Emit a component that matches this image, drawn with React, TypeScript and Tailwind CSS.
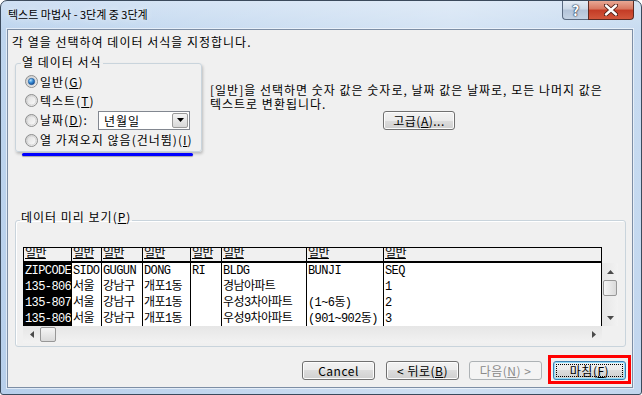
import React from 'react';

const colW = ['w-[48px]', 'w-[30px]', 'w-[41px]', 'w-[48px]', 'w-[31px]', 'w-[85px]', 'w-[77px]', 'w-[218px]'];

const rows = [
  ['ZIPCODE', 'SIDO', 'GUGUN', 'DONG', 'RI', 'BLDG', 'BUNJI', 'SEQ'],
  ['135-806', '서울', '강남구', '개포1동', '', '경남아파트', '', '1'],
  ['135-807', '서울', '강남구', '개포1동', '', '우성3차아파트', '(1~6동)', '2'],
  ['135-806', '서울', '강남구', '개포1동', '', '우성9차아파트', '(901~902동)', '3'],
];

const Radio = ({ on }: { on?: boolean }) => (
  <svg width="13" height="13" viewBox="0 0 13 13" className="shrink-0">
    <defs>
      <linearGradient id="rOuter" x1="0" y1="0" x2="1" y2="1">
        <stop offset="0" stopColor="#c9c9c9" />
        <stop offset="1" stopColor="#f6f6f6" />
      </linearGradient>
      <linearGradient id="rInner" x1="0" y1="0" x2="1" y2="1">
        <stop offset="0" stopColor="#dedede" />
        <stop offset="1" stopColor="#fbfbfb" />
      </linearGradient>
      <radialGradient id="rDot" cx="0.35" cy="0.3" r="0.8">
        <stop offset="0" stopColor="#b5e3fd" />
        <stop offset="0.45" stopColor="#3a8fd8" />
        <stop offset="1" stopColor="#0d3f86" />
      </radialGradient>
    </defs>
    <circle cx="6.5" cy="6.5" r="6" fill="url(#rOuter)" stroke="#8e8f8f" />
    <circle cx="6.5" cy="6.5" r="4.4" fill="url(#rInner)" stroke="#d0d0d0" strokeWidth="0.7" />
    {on && <circle cx="6.5" cy="6.5" r="3.2" fill="url(#rDot)" stroke="#1b4f8d" strokeWidth="0.6" />}
  </svg>
);

const Tri = ({ dir }: { dir: 'up' | 'down' | 'left' | 'right' }) => {
  const pts = {
    up: '0,4 3.5,0 7,4',
    down: '0,0 7,0 3.5,4',
    left: '4,0 4,7 0,3.5',
    right: '0,0 4,3.5 0,7',
  }[dir];
  const v = dir === 'up' || dir === 'down';
  return (
    <svg width={v ? 7 : 4} height={v ? 4 : 7} viewBox={v ? '0 0 7 4' : '0 0 4 7'}>
      <polygon points={pts} fill="#4a4a4a" />
    </svg>
  );
};

const Btn = ({ children, disabled, main }: { children: React.ReactNode; disabled?: boolean; main?: boolean }) => (
  <div
    className={
      disabled
        ? 'flex h-[19px] w-[73px] items-center justify-center rounded-[3px] border border-[#adb2b5] bg-[#f4f4f4] leading-[17px] tracking-[0.5px] text-[#8a8a8a]'
        : main
        ? 'flex h-[19px] w-[73px] rounded-[3px] border border-[#3c7fb1] bg-[linear-gradient(to_bottom,#f2f2f2_0%,#ebebeb_50%,#dddddd_50%,#cfcfcf_100%)] p-[1px] tracking-[0.5px] shadow-[inset_0_0_0_1px_#8fdcfb]'
        : 'flex h-[19px] w-[73px] items-center justify-center rounded-[3px] border border-[#707070] bg-[linear-gradient(to_bottom,#f2f2f2_0%,#ebebeb_50%,#dddddd_50%,#cfcfcf_100%)] leading-[17px] tracking-[0.5px] shadow-[inset_0_0_0_1px_#fcfcfc]'
    }
  >
    {main ? (
      <div className="m-[1px] flex flex-1 items-center justify-center border border-dotted border-black leading-[13px]">
        {children}
      </div>
    ) : (
      children
    )}
  </div>
);

export default function App() {
  return (
    <div className="h-[395px] w-[642px] overflow-hidden bg-white font-['Noto_Sans_CJK_KR',sans-serif] text-[12px] tracking-[1px] text-black">
      <div className="h-[395px] w-[642px] rounded-t-[7px] rounded-b-[3px] border border-[#3b4a5c] bg-[linear-gradient(to_right,rgba(255,255,255,0)_0%,rgba(255,255,255,0.35)_70%,rgba(255,255,255,0.15)_100%),linear-gradient(to_bottom,#cfe0f3_0px,#bed5ee_30px,#b7cfeb_100%)]">
        {/* title bar */}
        <div className="flex h-[28px] items-start justify-between">
          <div className="ml-[7px] mt-[5px] text-[11px] leading-[16px] tracking-normal [text-shadow:0_0_6px_rgba(255,255,255,0.9)]">
            텍스트 마법사 - 3단계 중 3단계
          </div>
          <div className="mr-[7px] flex">
            <div className="flex h-[19px] w-[26px] items-center justify-center rounded-bl-[4px] border border-r-0 border-t-0 border-[#5a6a80] bg-[linear-gradient(to_bottom,#e4ecf5_0%,#cdd9e7_45%,#b3c3d8_50%,#c4d3e4_100%)] text-[14px] font-bold leading-[16px] tracking-normal text-white [text-shadow:0_0_1px_#24364f,0_0_1px_#24364f,0_0_2px_#24364f]">
              ?
            </div>
            <div className="flex h-[19px] w-[46px] items-center justify-center rounded-br-[4px] border border-t-0 border-[#5e2a22] bg-[linear-gradient(to_bottom,#e8a894_0%,#d7765f_45%,#c43b25_50%,#d3573c_100%)]">
              <svg width="14" height="12" viewBox="0 0 14 12">
                <path d="M2 1.5 L12 10.5 M12 1.5 L2 10.5" stroke="#4a1a12" strokeWidth="4.2" strokeLinecap="round" />
                <path d="M2 1.5 L12 10.5 M12 1.5 L2 10.5" stroke="#ffffff" strokeWidth="2.4" strokeLinecap="round" />
              </svg>
            </div>
          </div>
        </div>

        {/* client area */}
        <div className="ml-[6px] flex h-[359px] w-[626px] flex-col border border-[#7d8ea5] bg-[#f0f0f0] shadow-[0_0_0_1px_rgba(255,255,255,0.55)]">
          <div className="ml-[4px] mt-[5px] h-[14px] leading-[14px]">각 열을 선택하여 데이터 서식을 지정합니다.</div>

          <div className="mt-[7px] flex items-start">
            <div className="ml-[7px] flex flex-col">
              <fieldset className="w-[187px] rounded-[3px] border border-[#c9d4dc] pb-[1px] pt-[2px] shadow-[1px_2px_3px_rgba(0,0,0,0.22)]">
                <legend className="ml-[5px] px-[1px] pb-[2px] leading-[12px]">열 데이터 서식</legend>
                <div className="flex h-[19px] items-center pl-[9px]">
                  <Radio on />
                  <span className="ml-[2px]">일반(<u>G</u>)</span>
                </div>
                <div className="flex h-[19px] items-center pl-[9px]">
                  <Radio />
                  <span className="ml-[2px]">텍스트(<u>T</u>)</span>
                </div>
                <div className="flex h-[20px] items-center pl-[9px]">
                  <Radio />
                  <span className="ml-[2px] w-[58px]">날짜(<u>D</u>):</span>
                  <div className="flex h-[19px] w-[92px] border border-[#828790] bg-white">
                    <span className="flex-1 pl-[5px] leading-[17px]">년월일</span>
                    <div className="m-[1px] flex w-[16px] items-center justify-center rounded-[2px] border border-[#9a9a9a] bg-[linear-gradient(to_bottom,#f4f4f4,#d8d8d8)]">
                      <svg width="7" height="4" viewBox="0 0 7 4">
                        <polygon points="0,0 7,0 3.5,4" fill="#000" />
                      </svg>
                    </div>
                  </div>
                </div>
                <div className="flex h-[20px] items-center pl-[9px]">
                  <Radio />
                  <span className="ml-[2px] whitespace-nowrap">열 가져오지 않음(건너뜀)(<u>I</u>)</span>
                </div>
              </fieldset>
              <div className="ml-[7px] mt-[1px] h-[3px] w-[171px] rounded-full bg-[#0000ff] shadow-[0_1px_1px_rgba(0,0,0,0.3)]" />
            </div>

            <div className="ml-[8px] mt-[27px] flex flex-col">
              <div className="whitespace-nowrap leading-[14px]">[일반]을 선택하면 숫자 값은 숫자로, 날짜 값은 날짜로, 모든 나머지 값은</div>
              <div className="whitespace-nowrap leading-[14px]">텍스트로 변환됩니다.</div>
              <div className="ml-[173px] flex h-[19px] w-[72px] items-center justify-center rounded-[3px] border border-[#707070] bg-[linear-gradient(to_bottom,#f2f2f2_0%,#ebebeb_50%,#dddddd_50%,#cfcfcf_100%)] leading-[17px] tracking-[0.5px] shadow-[inset_0_0_0_1px_#fcfcfc]">
                고급(<u>A</u>)...
              </div>
            </div>
          </div>

          <fieldset className="ml-[7px] mt-[55px] w-[611px] rounded-[3px] border border-[#c9d4dc] pb-[3px] pt-[17px] shadow-[inset_1px_1px_0_#ffffff]">
            <legend className="ml-[4px] px-[1px] pb-[7px] leading-[12px]">데이터 미리 보기(<u>P</u>)</legend>
            <div className="ml-[7px] flex w-[595px] flex-col">
              <div className="flex">
                <div className="h-[79px] w-[579px] overflow-hidden border-r border-t border-black bg-white font-['Liberation_Mono','Noto_Sans_CJK_KR',monospace] tracking-[-0.6px]">
                  <div className="flex h-[13px] bg-[#f0f0f0]">
                    {colW.map((w, i) => (
                      <div key={i} className={`${w} shrink-0 border-l border-black pl-[1px] leading-[13px] underline`}>
                        일반
                      </div>
                    ))}
                  </div>
                  <div className="h-[2px] bg-black" />
                  {rows.map((r, ri) => (
                    <div key={ri} className="flex h-[16px]">
                      {r.map((c, ci) => (
                        <div
                          key={ci}
                          className={`${colW[ci]} shrink-0 overflow-hidden whitespace-nowrap border-l border-black pl-[1px] leading-[16px] ${
                            ci === 0 ? 'bg-black text-white' : ''
                          }`}
                        >
                          {c}
                        </div>
                      ))}
                    </div>
                  ))}
                </div>
                <div className="flex w-[16px] flex-col">
                  <div className="h-[16px]" />
                  <div className="flex h-[63px] flex-col bg-[linear-gradient(to_right,#e6e6e6,#f2f2f2)]">
                    <div className="flex h-[17px] items-center justify-center">
                      <Tri dir="up" />
                    </div>
                    <div className="mx-[1px] h-[16px] rounded-[2px] border border-[#979797] bg-[linear-gradient(to_right,#f5f5f5,#dadada)]" />
                    <div className="flex-1" />
                    <div className="flex h-[17px] items-center justify-center">
                      <Tri dir="down" />
                    </div>
                  </div>
                </div>
              </div>
              <div className="flex">
                <div className="flex h-[17px] w-[579px] bg-[linear-gradient(to_bottom,#e6e6e6,#f2f2f2)]">
                  <div className="flex w-[17px] items-center justify-center">
                    <Tri dir="left" />
                  </div>
                  <div className="my-[1px] w-[16px] rounded-[2px] border border-[#979797] bg-[linear-gradient(to_bottom,#f5f5f5,#dadada)]" />
                  <div className="flex-1" />
                  <div className="flex w-[17px] items-center justify-center">
                    <Tri dir="right" />
                  </div>
                </div>
                <div className="w-[16px]" />
              </div>
            </div>
          </fieldset>

          <div className="mt-[8px] flex items-start justify-end pr-[1px]">
            <div className="mt-[6px]">
              <Btn>Cancel</Btn>
            </div>
            <div className="ml-[11px] mt-[6px]">
              <Btn>
                &lt; 뒤로(<u>B</u>)
              </Btn>
            </div>
            <div className="ml-[10px] mt-[6px]">
              <Btn disabled>
                다음(<u>N</u>) &gt;
              </Btn>
            </div>
            <div className="ml-[6px] border-[3px] border-[#ff0000] px-[2px] pb-[1px] pt-[3px]">
              <Btn main>
                마침(<u>F</u>)
              </Btn>
            </div>
          </div>
        </div>
      </div>
    </div>
  );
}
